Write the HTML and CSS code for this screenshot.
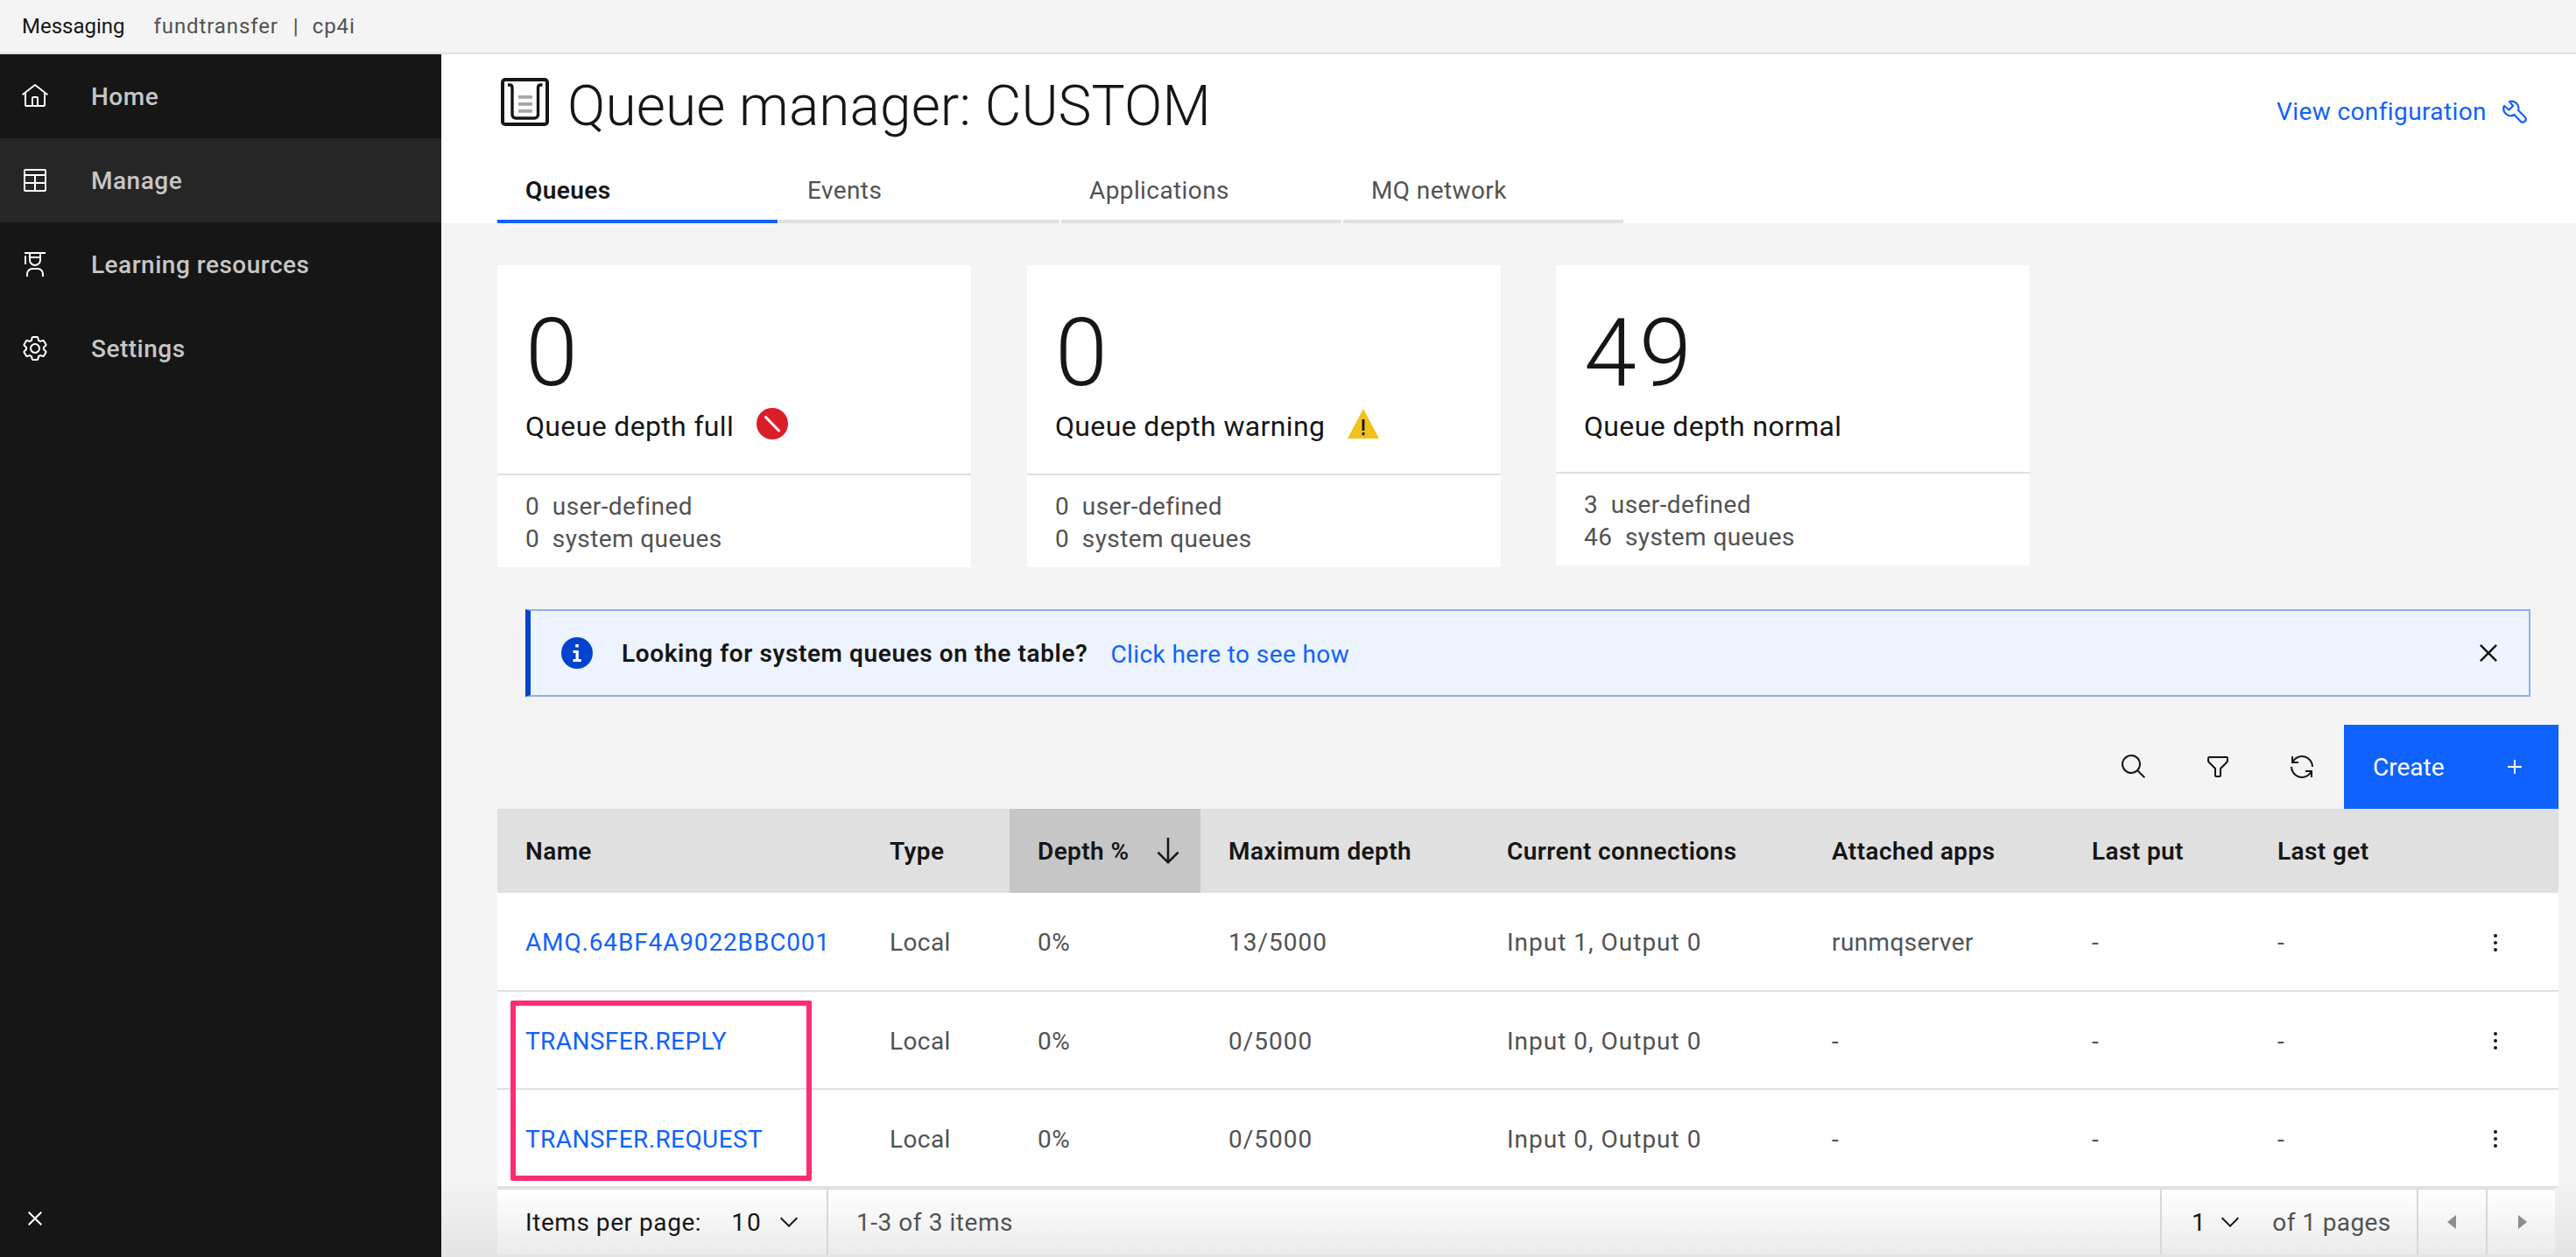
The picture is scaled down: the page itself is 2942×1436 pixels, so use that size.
FILE: index.html
```html
<!DOCTYPE html>
<html lang="en">
<head>
  <meta charset="UTF-8" />
  <title>Queue manager: CUSTOM</title>
  <link rel="stylesheet" href="styles.css">
</head>
<body>
  <header class="topbar">
    <span class="brand">Messaging</span>
    <span class="crumb">fundtransfer</span>
    <span class="crumb-sep">|</span>
    <span class="crumb">cp4i</span>
  </header>

  <div class="layout">
    <nav class="sidebar">
      <a class="nav-item">
        <svg class="nav-icon" viewBox="0 0 32 32"><path d="M16.6123,2.2138a1.01,1.01,0,0,0-1.2427,0L1,13.4194l1.2427,1.5717L4,13.6209V26a2.0041,2.0041,0,0,0,2,2H26a2.0037,2.0037,0,0,0,2-2V13.63L29.7573,15,31,13.4282ZM18,26H14V18h4Zm2,0V18a2.0023,2.0023,0,0,0-2-2H14a2.002,2.002,0,0,0-2,2v8H6V12.0615l10-7.79,10,7.8005V26Z"/></svg>
        Home
      </a>
      <a class="nav-item active">
        <svg class="nav-icon" viewBox="0 0 32 32"><path d="M27,3H5A2,2,0,0,0,3,5V27a2,2,0,0,0,2,2H27a2,2,0,0,0,2-2V5A2,2,0,0,0,27,3Zm0,2V9H5V5ZM17,11H27v7H17Zm-2,7H5V11H15ZM5,20H15v7H5Zm12,7V20H27v7Z"/></svg>
        Manage
      </a>
      <a class="nav-item">
        <svg class="nav-icon" viewBox="0 0 32 32"><path d="M26,30H24V27a5.0059,5.0059,0,0,0-5-5H13a5.0059,5.0059,0,0,0-5,5v3H6V27a7.0082,7.0082,0,0,1,7-7h6a7.0082,7.0082,0,0,1,7,7Z"/><path d="M5,6A1,1,0,0,0,4,7v9H6V7A1,1,0,0,0,5,6Z"/><path d="M4,2V4H9v7a7,7,0,0,0,14,0V4h5V2Zm7,2H21V7H11Zm5,12a5,5,0,0,1-5-5V9H21v2A5,5,0,0,1,16,16Z"/></svg>
        Learning resources
      </a>
      <a class="nav-item">
        <svg class="nav-icon" viewBox="0 0 32 32"><path d="M27,16.76c0-.25,0-.5,0-.76s0-.51,0-.77l1.92-1.68A2,2,0,0,0,29.3,11L26.94,7a2,2,0,0,0-1.73-1,2,2,0,0,0-.64.1l-2.43.82a11.35,11.35,0,0,0-1.31-.75l-.51-2.52a2,2,0,0,0-2-1.61H13.64a2,2,0,0,0-2,1.61l-.51,2.52a11.48,11.48,0,0,0-1.32.75L7.43,6.06A2,2,0,0,0,6.79,6,2,2,0,0,0,5.06,7L2.7,11a2,2,0,0,0,.41,2.51L5,15.24c0,.25,0,.5,0,.76s0,.51,0,.77L3.11,18.45A2,2,0,0,0,2.7,21L5.06,25a2,2,0,0,0,1.73,1,2,2,0,0,0,.64-.1l2.43-.82a11.35,11.35,0,0,0,1.31.75l.51,2.52a2,2,0,0,0,2,1.61h4.72a2,2,0,0,0,2-1.61l.51-2.52a11.48,11.48,0,0,0,1.32-.75l2.42.82a2,2,0,0,0,.64.1,2,2,0,0,0,1.73-1L29.3,21a2,2,0,0,0-.41-2.51ZM25.21,24l-3.43-1.16a8.86,8.86,0,0,1-2.71,1.57L18.36,28H13.64l-.71-3.55a9.36,9.36,0,0,1-2.7-1.57L6.79,24,4.43,20l2.72-2.4a8.9,8.9,0,0,1,0-3.13L4.43,12,6.79,8l3.43,1.16a8.86,8.86,0,0,1,2.71-1.57L13.64,4h4.72l.71,3.55a9.36,9.36,0,0,1,2.7,1.57L25.21,8,27.57,12l-2.72,2.4a8.9,8.9,0,0,1,0,3.13L27.57,20Z"/><path d="M16,22a6,6,0,1,1,6-6A5.94,5.94,0,0,1,16,22Zm0-10a3.91,3.91,0,0,0-4,4,3.91,3.91,0,0,0,4,4,3.91,3.91,0,0,0,4-4A3.91,3.91,0,0,0,16,12Z"/></svg>
        Settings
      </a>
      <svg class="nav-close" viewBox="0 0 32 32"><path d="M24 9.4L22.6 8 16 14.6 9.4 8 8 9.4 14.6 16 8 22.6 9.4 24 16 17.4 22.6 24 24 22.6 17.4 16 24 9.4z"/></svg>
    </nav>

    <main class="main">
      <section class="page-head">
        <div class="title-row">
          <div class="title">
            <svg class="title-icon" viewBox="0 0 55 55">
              <rect x="2" y="2" width="51" height="51" rx="3" fill="none" stroke="#161616" stroke-width="4"/>
              <path d="M8 8h2q3 0 3 3V42a4 4 0 0 0 4 4H38.5a4 4 0 0 0 4-4V11q0-3 3-3h2" fill="none" stroke="#161616" stroke-width="3.4"/>
              <rect x="20" y="20" width="16" height="3.8" fill="#a8a8a8"/>
              <rect x="20" y="28" width="16" height="3.8" fill="#a8a8a8"/>
              <rect x="20" y="36" width="16" height="3.8" fill="#a8a8a8"/>
            </svg>
            <h1>Queue manager: CUSTOM</h1>
          </div>
          <a class="config-link">View configuration
            <svg class="config-icon" viewBox="0 0 28 28"><path d="M8 2a8 8 0 0 1 10 10L26 20a3.6 3.6 0 0 1-5 5L13.5 17A8 8 0 0 1 2 7L7.5 11.5 12 7Z" fill="none" stroke="#0f62fe" stroke-width="2.2" stroke-linejoin="round"/></svg>
          </a>
        </div>
        <div class="tabs">
          <a class="tab selected">Queues</a>
          <a class="tab">Events</a>
          <a class="tab">Applications</a>
          <a class="tab">MQ network</a>
        </div>
      </section>

      <section class="cards">
        <div class="card">
          <div class="card-top">
            <div class="big-num">0</div>
            <div class="card-label">Queue depth full
              <svg class="status-icon" viewBox="0 0 36 36"><circle cx="18" cy="18" r="18" fill="#da1e28"/><path d="M10.5 10.5L25.5 26" stroke="#fff" stroke-width="3" stroke-linecap="round"/></svg>
            </div>
          </div>
          <div class="card-foot">
            <div>0&nbsp; user-defined</div>
            <div>0&nbsp; system queues</div>
          </div>
        </div>
        <div class="card">
          <div class="card-top">
            <div class="big-num">0</div>
            <div class="card-label">Queue depth warning
              <svg class="status-icon" viewBox="0 0 36 36"><path d="M18 1L36 35H0z" fill="#f1c21b"/><path d="M16.6 13h2.8v13h-2.8zM16.6 28h2.8v3.2h-2.8z" fill="#161616"/></svg>
            </div>
          </div>
          <div class="card-foot">
            <div>0&nbsp; user-defined</div>
            <div>0&nbsp; system queues</div>
          </div>
        </div>
        <div class="card short">
          <div class="card-top">
            <div class="big-num">49</div>
            <div class="card-label">Queue depth normal</div>
          </div>
          <div class="card-foot">
            <div>3&nbsp; user-defined</div>
            <div>46&nbsp; system queues</div>
          </div>
        </div>
      </section>

      <section class="notice">
        <svg class="notice-icon" viewBox="0 0 36 36"><circle cx="18" cy="18" r="18" fill="#0043ce"/><path d="M16.2 8h3.6v3.6h-3.6zM13.5 15h6.3v10h3v3h-9.3v-3h3v-7h-3z" fill="#fff"/></svg>
        <strong class="notice-title">Looking for system queues on the table?</strong>
        <a class="notice-link">Click here to see how</a>
        <svg class="notice-close" viewBox="0 0 32 32"><path d="M24 9.4L22.6 8 16 14.6 9.4 8 8 9.4 14.6 16 8 22.6 9.4 24 16 17.4 22.6 24 24 22.6 17.4 16 24 9.4z"/></svg>
      </section>

      <section class="toolbar">
        <button class="tool-btn"><svg viewBox="0 0 32 32"><path d="M29,27.5859l-7.5521-7.5521a11.0177,11.0177,0,1,0-1.4141,1.4141L27.5859,29ZM4,13a9,9,0,1,1,9,9A9.01,9.01,0,0,1,4,13Z"/></svg></button>
        <button class="tool-btn"><svg viewBox="0 0 32 32"><path d="M18,28H14a2,2,0,0,1-2-2V18.41L4.59,11A2,2,0,0,1,4,9.59V6A2,2,0,0,1,6,4H26a2,2,0,0,1,2,2V9.59A2,2,0,0,1,27.41,11L20,18.41V26A2,2,0,0,1,18,28ZM6,6V9.59l8,8V26h4V17.59l8-8V6Z"/></svg></button>
        <button class="tool-btn"><svg viewBox="0 0 32 32"><path d="M12,10H6.78A11,11,0,0,1,27,16h2A13,13,0,0,0,6,7.68V4H4v8h8Z"/><path d="M20,22h5.22A11,11,0,0,1,5,16H3a13,13,0,0,0,23,8.32V28h2V20H20Z"/></svg></button>
        <button class="create-btn">Create
          <svg viewBox="0 0 32 32"><path d="M17 15V8h-2v7H8v2h7v7h2v-7h7v-2h-7z"/></svg>
        </button>
      </section>

      <section class="table-wrap">
        <table class="queues">
          <colgroup>
            <col class="c-name"><col class="c-type"><col class="c-depth"><col class="c-max"><col class="c-conn"><col class="c-apps"><col class="c-put"><col class="c-get"><col class="c-act">
          </colgroup>
          <thead>
            <tr>
              <th>Name</th>
              <th>Type</th>
              <th class="sorted"><span class="sort-head">Depth %
                <svg viewBox="0 0 32 32"><path d="M24.59 16.59L17 24.17V4h-2v20.17l-7.59-7.58L6 18l10 10 10-10-1.41-1.41z"/></svg></span></th>
              <th>Maximum depth</th>
              <th>Current connections</th>
              <th>Attached apps</th>
              <th>Last put</th>
              <th>Last get</th>
              <th></th>
            </tr>
          </thead>
          <tbody>
            <tr>
              <td><a class="wide">AMQ.64BF4A9022BBC001</a></td>
              <td>Local</td><td>0%</td><td class="wide-cell">13/5000</td><td class="wide-cell">Input 1, Output 0</td><td>runmqserver</td><td>-</td><td>-</td>
              <td class="act"><svg viewBox="0 0 32 32"><circle cx="16" cy="8" r="2"/><circle cx="16" cy="16" r="2"/><circle cx="16" cy="24" r="2"/></svg></td>
            </tr>
            <tr>
              <td><a>TRANSFER.REPLY</a></td>
              <td>Local</td><td>0%</td><td class="wide-cell">0/5000</td><td class="wide-cell">Input 0, Output 0</td><td>-</td><td>-</td><td>-</td>
              <td class="act"><svg viewBox="0 0 32 32"><circle cx="16" cy="8" r="2"/><circle cx="16" cy="16" r="2"/><circle cx="16" cy="24" r="2"/></svg></td>
            </tr>
            <tr>
              <td><a>TRANSFER.REQUEST</a></td>
              <td>Local</td><td>0%</td><td class="wide-cell">0/5000</td><td class="wide-cell">Input 0, Output 0</td><td>-</td><td>-</td><td>-</td>
              <td class="act"><svg viewBox="0 0 32 32"><circle cx="16" cy="8" r="2"/><circle cx="16" cy="16" r="2"/><circle cx="16" cy="24" r="2"/></svg></td>
            </tr>
          </tbody>
        </table>
        <div class="highlight"></div>
      </section>

      <footer class="pager">
        <div class="pager-size">Items per page:
          <span class="pager-val">10</span>
          <svg viewBox="0 0 32 32"><path d="M16 22L6 12l1.4-1.4 8.6 8.6 8.6-8.6L26 12z"/></svg>
        </div>
        <div class="pager-count">1-3 of 3 items</div>
        <div class="pager-page">
          <span class="pager-val">1</span>
          <svg viewBox="0 0 32 32"><path d="M16 22L6 12l1.4-1.4 8.6 8.6 8.6-8.6L26 12z"/></svg>
          <span class="pager-total">of 1 pages</span>
        </div>
        <button class="pager-btn"><svg viewBox="0 0 32 32"><path d="M20 24l-10-8 10-8z"/></svg></button>
        <button class="pager-btn"><svg viewBox="0 0 32 32"><path d="M12 8l10 8-10 8z"/></svg></button>
      </footer>
    </main>
  </div>
</body>
</html>
```
FILE: styles.css
```css
* {
  box-sizing: border-box;
}
html, body {
  height: 100%;
}
body {
  margin: 0;
  overflow: hidden;
  font-family: Roboto, 'Noto Sans', sans-serif;
  font-size: 28px;
  letter-spacing: 0.4px;
  color: #161616;
  background-color: #f4f4f4;
}
.topbar {
  height: 62px;
  display: flex;
  align-items: center;
  padding-left: 25px;
  font-size: 24px;
  letter-spacing: 0;
  background-color: #f4f4f4;
  border-bottom: 2px solid #e0e0e0;
}
.brand {
  margin-right: 33px;
}
.crumb {
  color: #525252;
  letter-spacing: 0.9px;
}
.crumb-sep {
  color: #525252;
  margin: 0 16px 0 17px;
}
.layout {
  display: flex;
  height: 1374px;
}
.sidebar {
  position: relative;
  width: 504px;
  flex-shrink: 0;
  background-color: #161616;
}
.nav-item {
  display: flex;
  align-items: center;
  height: 96px;
  padding-left: 24px;
  font-weight: 500;
  letter-spacing: 0.5px;
  color: #c6c6c6;
}
.nav-item.active {
  background-color: #262626;
}
.nav-icon {
  width: 32px;
  height: 32px;
  margin-right: 48px;
  fill: #fff;
}
.nav-close {
  position: absolute;
  left: 24px;
  bottom: 28px;
  width: 32px;
  height: 32px;
  fill: #fff;
}
.main {
  flex: 1;
  min-width: 0;
  background: linear-gradient(#f4f4f4 1280px, #e4e4e4);
}
.page-head {
  height: 193px;
  padding: 0 0 0 64px;
  background-color: #fff;
}
.title-row {
  display: flex;
  justify-content: space-between;
  align-items: flex-start;
  height: 131px;
  padding: 27px 56px 0 4px;
}
.title {
  display: flex;
  align-items: flex-start;
}
.title-icon {
  width: 55px;
  height: 55px;
  margin-right: 21px;
}
.title h1 {
  margin: 4px 0 0;
  font-size: 64px;
  line-height: 58px;
  font-weight: 300;
  letter-spacing: 0.1px;
  color: #161616;
}
.config-link {
  display: flex;
  align-items: center;
  margin-top: 22px;
  color: #0f62fe;
}
.config-icon {
  width: 28px;
  height: 28px;
  margin-left: 18px;
}
.tabs {
  display: flex;
  gap: 2px;
}
.tab {
  width: 320px;
  height: 62px;
  padding: 5px 32px 0;
  line-height: 40px;
  color: #525252;
  border-bottom: 4px solid #e0e0e0;
}
.tab.selected {
  font-weight: 600;
  color: #161616;
  border-bottom-color: #0f62fe;
}
.cards {
  display: flex;
  align-items: flex-start;
  gap: 64px;
  padding: 48px 0 0 64px;
}
.card {
  width: 541px;
  height: 345px;
  background-color: #fff;
}
.card.short {
  height: 343px;
  margin-left: -1px;
}
.card-top {
  height: 240px;
  padding: 40px 32px 0;
  border-bottom: 2px solid #e0e0e0;
}
.card.short .card-top {
  height: 238px;
}
.big-num {
  font-size: 108px;
  line-height: 120px;
  font-weight: 300;
  letter-spacing: 3px;
}
.card-label {
  display: flex;
  align-items: center;
  margin-top: 4px;
  height: 40px;
  font-size: 32px;
  letter-spacing: 0.35px;
}
.status-icon {
  width: 36px;
  height: 36px;
  margin-left: 26px;
  margin-top: -6px;
}
.card-foot {
  padding: 17px 32px 0;
  line-height: 37px;
  color: #525252;
}
.notice {
  display: flex;
  align-items: center;
  height: 100px;
  margin: 48px 52px 0 96px;
  padding-left: 35px;
  padding-right: 26px;
  background-color: #edf4ff;
  border: 2px solid #8fb0ee;
  border-left: 6px solid #0043ce;
}
.notice-icon {
  width: 36px;
  height: 36px;
  margin-right: 33px;
}
.notice-title {
  font-weight: 600;
  letter-spacing: 0.6px;
}
.notice-link {
  margin: 2px 0 0 26px;
  color: #0f62fe;
}
.notice-close {
  width: 40px;
  height: 40px;
  margin-left: auto;
  fill: #161616;
}
.toolbar {
  display: flex;
  justify-content: flex-end;
  height: 96px;
  margin: 32px 20px 0 64px;
}
.tool-btn {
  width: 96px;
  height: 96px;
  display: flex;
  align-items: center;
  justify-content: center;
  padding: 0;
  border: none;
  background: none;
}
.tool-btn svg {
  width: 32px;
  height: 32px;
  fill: #161616;
}
.create-btn {
  display: flex;
  align-items: center;
  justify-content: space-between;
  width: 245px;
  padding: 0 34px 0 33px;
  border: none;
  font-family: inherit;
  font-size: 28px;
  color: #fff;
  background-color: #0f62fe;
}
.create-btn svg {
  width: 32px;
  height: 32px;
  fill: #fff;
}
.table-wrap {
  position: relative;
  margin: 0 20px 0 64px;
}
.queues {
  width: 100%;
  table-layout: fixed;
  border-collapse: collapse;
}
.c-name { width: 416px; }
.c-type { width: 169px; }
.c-depth { width: 218px; }
.c-max { width: 318px; }
.c-conn { width: 371px; }
.c-apps { width: 297px; }
.c-put { width: 212px; }
.c-get { width: 212px; }
.c-act { width: 141px; }
.queues th {
  height: 96px;
  padding: 0 0 0 32px;
  text-align: left;
  font-weight: 600;
  background-color: #e0e0e0;
}
.queues th.sorted {
  background-color: #c6c6c6;
}
.sort-head {
  display: flex;
  align-items: center;
}
.sort-head svg {
  width: 40px;
  height: 40px;
  margin-left: 24px;
  fill: #161616;
}
.queues td {
  height: 112px;
  padding: 2px 0 0 32px;
  color: #525252;
  background-color: #fff;
  border-bottom: 2px solid #e0e0e0;
}
.queues td.wide-cell {
  letter-spacing: 1px;
}
.queues td a {
  color: #0f62fe;
}
.queues td a.wide {
  letter-spacing: 0.85px;
}
.queues td.act {
  padding-left: 53px;
}
.act svg {
  display: block;
  width: 32px;
  height: 32px;
  fill: #161616;
}
.highlight {
  position: absolute;
  left: 15px;
  top: 219px;
  width: 344px;
  height: 206px;
  border: 6px solid #ff2d6f;
  border-radius: 2px;
}
.pager {
  display: flex;
  align-items: center;
  height: 76px;
  margin: 0 24px 0 64px;
  border-top: 2px solid #e0e0e0;
  background: linear-gradient(#fff, #ebebeb);
  color: #525252;
  letter-spacing: 0.55px;
}
.pager > * {
  display: flex;
  align-items: center;
  height: 100%;
}
.pager svg {
  width: 32px;
  height: 32px;
  fill: #161616;
}
.pager-val {
  color: #161616;
}
.pager-size {
  width: 378px;
  padding-left: 32px;
  color: #161616;
  border-right: 2px solid #d8d8d8;
}
.pager-size .pager-val {
  margin-left: 34px;
  letter-spacing: 2px;
}
.pager-size svg {
  margin-left: 14px;
}
.pager-count {
  flex: 1;
  padding-left: 32px;
}
.pager-page {
  width: 293px;
  padding-left: 34px;
  border-left: 2px solid #d8d8d8;
}
.pager-page svg {
  margin-left: 12px;
}
.pager-total {
  margin-left: 32px;
  letter-spacing: 0.4px;
}
.pager-btn {
  justify-content: center;
  width: 79px;
  padding: 0;
  border: none;
  border-left: 2px solid #d8d8d8;
  background: none;
}
.pager-btn svg {
  fill: #8d8d8d;
}
```
